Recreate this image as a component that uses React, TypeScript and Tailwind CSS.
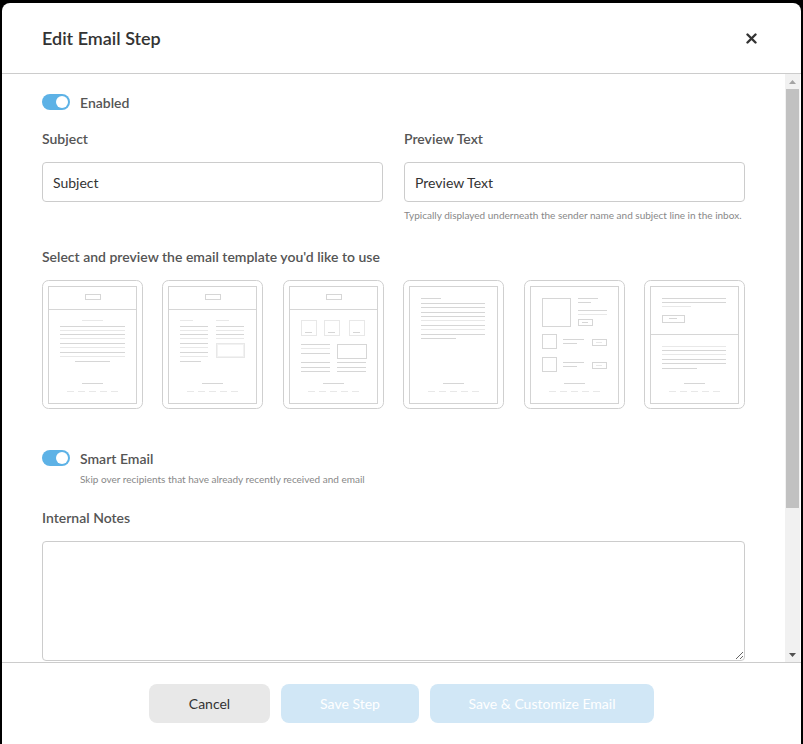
import React from "react";

const C = "#d6d6d6";
const CL = "#e8e8e8";

function Ln({ x1, y1, x2, c = C }: { x1: number; y1: number; x2: number; c?: string }) {
  return <line x1={x1} y1={y1 + 0.5} x2={x2} y2={y1 + 0.5} stroke={c} strokeWidth={1} />;
}

function Box({ x, y, w, h, c = C }: { x: number; y: number; w: number; h: number; c?: string }) {
  return <rect x={x + 0.5} y={y + 0.5} width={w} height={h} fill="none" stroke={c} strokeWidth={1} />;
}

function Footer() {
  return (
    <g>
      <Ln x1={40} y1={103} x2={61} />
      {[25, 36, 47, 58, 69].map((x) => (
        <Ln key={x} x1={x} y1={111} x2={x + 7} c={CL} />
      ))}
    </g>
  );
}

function Header() {
  return (
    <g>
      <Ln x1={7} y1={29} x2={94} />
      <Box x={43} y={14} w={15} h={5} />
    </g>
  );
}

function Thumb({ children }: { children: React.ReactNode }) {
  return (
    <svg width="101" height="130" viewBox="0 0 101 130" className="block">
      <rect x={0.5} y={0.5} width={100} height={128} rx={6} fill="white" stroke="#cfcfcf" strokeWidth={1} />
      <rect x={6.5} y={6.5} width={88} height={117} fill="none" stroke="#d3d3d3" strokeWidth={1} />
      {children}
      <Footer />
    </svg>
  );
}

function T1() {
  return (
    <Thumb>
      <Header />
      <Ln x1={40} y1={40} x2={61} c={CL} />
      {[46, 50, 54, 58, 63, 67, 72, 76].map((y, i) => (
        <Ln key={y} x1={18} y1={y} x2={83} c={i % 2 === 1 ? CL : C} />
      ))}
      <Ln x1={33} y1={81} x2={68} />
    </Thumb>
  );
}

function T2() {
  return (
    <Thumb>
      <Header />
      <Ln x1={18} y1={40} x2={31} c={CL} />
      {[46, 50, 54, 58, 63, 67, 72, 76].map((y, i) => (
        <Ln key={y} x1={18} y1={y} x2={46} c={i % 2 === 1 ? CL : C} />
      ))}
      <Ln x1={18} y1={81} x2={39} />
      <Ln x1={54} y1={40} x2={67} c={CL} />
      {[46, 50, 54, 58].map((y, i) => (
        <Ln key={y} x1={54} y1={y} x2={82} c={i % 2 === 1 ? CL : C} />
      ))}
      <Box x={54} y={63} w={28} h={14} c={CL} />
      <Box x={55} y={64} w={26} h={12} c="#f2f2f2" />
    </Thumb>
  );
}

function T3() {
  return (
    <Thumb>
      <Header />
      {[18, 41, 66].map((x) => (
        <g key={x}>
          <Box x={x} y={40} w={15} h={15} c={CL} />
          <Ln x1={x + 4} y1={52} x2={x + 11} c={C} />
        </g>
      ))}
      {[64, 68, 73, 82, 87, 91].map((y, i) => (
        <Ln key={y} x1={18} y1={y} x2={47} c={i === 1 ? CL : C} />
      ))}
      <Box x={54} y={64} w={29} h={14} />
      {[82, 87, 91].map((y) => (
        <Ln key={y} x1={54} y1={y} x2={83} />
      ))}
    </Thumb>
  );
}

function T4() {
  return (
    <Thumb>
      <Ln x1={18} y1={18} x2={38} />
      {[23, 27, 32, 36, 40, 45, 49, 54].map((y, i) => (
        <Ln key={y} x1={18} y1={y} x2={82} c={i === 4 || i === 6 ? CL : C} />
      ))}
      <Ln x1={18} y1={58} x2={53} />
    </Thumb>
  );
}

function T5() {
  return (
    <Thumb>
      <Box x={18} y={18} w={28} h={28} />
      <Ln x1={54} y1={18} x2={74} />
      <Ln x1={54} y1={22} x2={67} />
      <Ln x1={54} y1={30} x2={83} />
      <Ln x1={54} y1={34} x2={83} c={CL} />
      <Box x={54} y={39} w={14} h={6} />
      <Ln x1={58} y1={42} x2={64} />
      {[54, 77].map((y) => (
        <g key={y}>
          <Box x={18} y={y} w={14} h={14} />
          <Ln x1={39} y1={y + 5} x2={60} />
          <Ln x1={39} y1={y + 9} x2={53} />
          <Box x={68} y={y + 5} w={14} h={6} />
          <Ln x1={72} y1={y + 8} x2={78} c={CL} />
        </g>
      ))}
    </Thumb>
  );
}

function T6() {
  return (
    <Thumb>
      <Ln x1={18} y1={18} x2={82} />
      <Ln x1={18} y1={22} x2={82} />
      <Ln x1={18} y1={26} x2={47} c={CL} />
      <Box x={18} y={35} w={22} h={7} />
      <Ln x1={25} y1={38} x2={33} />
      <Ln x1={7} y1={54} x2={94} />
      {[66, 70, 74, 79, 83].map((y, i) => (
        <Ln key={y} x1={18} y1={y} x2={82} c={i === 0 || i === 2 ? CL : C} />
      ))}
      <Ln x1={18} y1={88} x2={53} />
    </Thumb>
  );
}

function Toggle() {
  return (
    <div className="w-[28px] h-[16px] rounded-full bg-[#5db2e6] flex items-center justify-end pr-[2px] shrink-0">
      <div className="w-[12px] h-[12px] rounded-full bg-white" />
    </div>
  );
}

function ScrollBar() {
  return (
    <div className="w-[15px] shrink-0 bg-[#f1f1f1] flex flex-col">
      <div className="h-[15px] flex items-center justify-center shrink-0">
        <svg width="7" height="4" viewBox="0 0 7 4">
          <path d="M3.5 0 L7 4 L0 4 Z" fill="#a3a3a3" />
        </svg>
      </div>
      <div className="h-[419px] mx-[1px] bg-[#c1c1c1] shrink-0" />
      <div className="flex-1" />
      <div className="h-[15px] flex items-center justify-center shrink-0">
        <svg width="7" height="4" viewBox="0 0 7 4">
          <path d="M0 0 L7 0 L3.5 4 Z" fill="#505050" />
        </svg>
      </div>
    </div>
  );
}

export default function App() {
  return (
    <div className="w-[803px] h-[744px] bg-black overflow-hidden pt-[3px] pl-[2px] font-[Lato,sans-serif]">
      <div className="w-[799px] h-[760px] bg-white rounded-[8px] flex flex-col overflow-hidden">
        <div className="h-[71px] border-b border-[#cccccc] flex items-center justify-between pl-[40px] pr-[44px] shrink-0">
          <h1 className="text-[18px] text-[#333333] font-semibold">Edit Email Step</h1>
          <svg width="11" height="11" viewBox="0 0 11 11">
            <path d="M1.5 1.5 L9.5 9.5 M9.5 1.5 L1.5 9.5" stroke="#333" strokeWidth="2.4" strokeLinecap="round" />
          </svg>
        </div>

        <div className="h-[588px] flex shrink-0 pr-[1px]">
          <div className="flex-1 overflow-hidden pl-[40px] pr-[40px] pt-[20px]">
            <div className="flex items-center gap-[10px] h-[16px]">
              <Toggle />
              <span className="text-[14px] font-semibold text-[#555555]">Enabled</span>
            </div>

            <div className="grid grid-cols-2 gap-x-[21px] mt-[19px]">
              <div className="flex flex-col">
                <label className="text-[14px] leading-[20px] font-semibold text-[#555555]">Subject</label>
                <input
                  placeholder="Subject"
                  className="mt-[13px] h-[40px] border border-[#cccccc] rounded-[4px] px-[10px] text-[14px] text-[#333] placeholder:text-[#333333] outline-none"
                />
              </div>
              <div className="flex flex-col">
                <label className="text-[14px] leading-[20px] font-semibold text-[#555555]">Preview Text</label>
                <input
                  placeholder="Preview Text"
                  className="mt-[13px] h-[40px] border border-[#cccccc] rounded-[4px] px-[10px] text-[14px] text-[#333] placeholder:text-[#333333] outline-none"
                />
                <p className="mt-[6px] text-[10px] leading-[14px] text-[#888888]">
                  Typically displayed underneath the sender name and subject line in the inbox.
                </p>
              </div>
            </div>

            <div className="mt-[25px] text-[14px] leading-[20px] font-semibold text-[#555555]">
              Select and preview the email template you'd like to use
            </div>
            <div className="mt-[13px] flex justify-between">
              <T1 />
              <T2 />
              <T3 />
              <T4 />
              <T5 />
              <T6 />
            </div>

            <div className="mt-[40px] flex items-center gap-[10px] h-[16px]">
              <Toggle />
              <span className="text-[14px] font-semibold text-[#555555]">Smart Email</span>
            </div>
            <p className="mt-[6px] pl-[38px] text-[10px] leading-[14px] text-[#888888]">
              Skip over recipients that have already recently received and email
            </p>

            <div className="mt-[22px] text-[14px] leading-[20px] font-semibold text-[#555555]">Internal Notes</div>
            <textarea className="mt-[13px] block w-full h-[120px] border border-[#cccccc] rounded-[4px] outline-none" />
          </div>
          <ScrollBar />
        </div>

        <div className="border-t border-[#cccccc] pt-[21px] flex justify-center gap-[11px] shrink-0">
          <button className="w-[121px] h-[39px] rounded-[8px] bg-[#e8e8e8] text-[14px] text-[#333333]">Cancel</button>
          <button className="w-[138px] h-[39px] rounded-[8px] bg-[#d1e7f6] text-[14px] text-white">Save Step</button>
          <button className="w-[224px] h-[39px] rounded-[8px] bg-[#d1e7f6] text-[14px] text-white">
            Save &amp; Customize Email
          </button>
        </div>
      </div>
    </div>
  );
}
